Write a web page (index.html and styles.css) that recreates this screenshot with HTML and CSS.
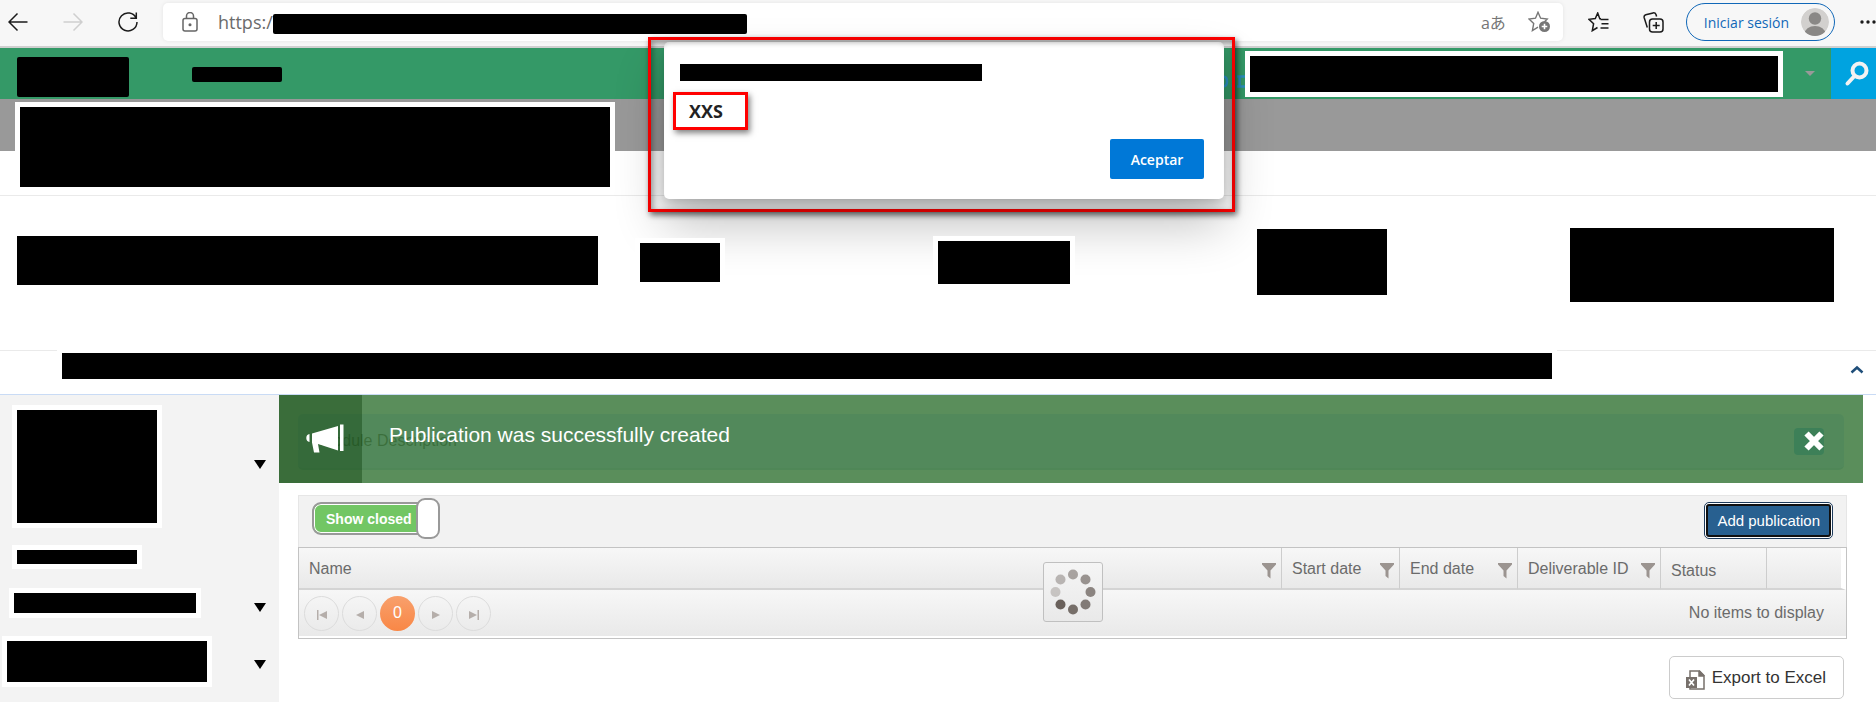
FILE: index.html
```html
<!DOCTYPE html>
<html lang="es">
<head>
<meta charset="utf-8">
<title>Publications</title>
<link rel="stylesheet" href="styles.css">
</head>
<body>
<header class="browser">
  <button class="nav" aria-label="Back"><svg width="20" height="20" viewBox="0 0 20 20"><path d="M19.500 10H1M9.500 1.500L1 10l8.500 8.500"/></svg></button>
  <button class="nav nav-off" aria-label="Forward"><svg width="20" height="20" viewBox="0 0 20 20"><path d="M.5 10H19M10.500 1.500L19 10l-8.500 8.500"/></svg></button>
  <button class="nav" aria-label="Reload"><svg width="20" height="20" viewBox="0 0 20 20"><path d="M18.200 6.200A9 9 0 1 0 19 10M18.300.5v5.700h-6"/></svg></button>
  <div class="address">
    <svg class="lock" width="16" height="20" viewBox="0 0 16 20"><rect x="1" y="6.500" width="14" height="12.500" rx="2"/><path d="M4.500 6.500V4a3.500 3.500 0 0 1 7 0v2.500"/><circle cx="8" cy="12.800" r=".8"/></svg>
    <span class="url">https:/</span><span class="bar bar-url"></span>
    <span class="translate">aあ</span>
    <svg class="star" width="23" height="22" viewBox="0 0 23 22"><path d="M10 16.200l-5.600 3.300 1.300-6.900L1 8l6.500-.8L10 1.300l2.600 5.900 6.600.8-2.400 2.400"/><circle class="fill" cx="16.500" cy="15.500" r="5.500"/><path class="plus" d="M16.500 12.700v5.600M13.700 15.500h5.600"/></svg>
  </div>
  <button class="nav" aria-label="Favorites"><svg width="21" height="20" viewBox="0 0 21 20"><path d="M13 6.800h-1.200L9.700 1 7.300 6.500 1 7.300l4.600 4.400-1.300 7 5.200-3.200M12.500 7.500h8M13.500 11.800h7M12.500 16h8"/></svg></button>
  <button class="nav" aria-label="Collections"><svg width="21" height="21" viewBox="0 0 21 21"><rect x="6.500" y="7" width="13.500" height="13" rx="3"/><path d="M13.200 10v7M9.700 13.500h7M4.300 15.500L1.200 5.800Q.6 3.600 2.800 2.800L10 .9q2.200-.4 3 1.600l.6 2"/></svg></button>
  <button class="signin">Iniciar sesión
    <svg width="28" height="28" viewBox="0 0 28 28"><defs><clipPath id="disc"><circle cx="14" cy="14" r="14"/></clipPath></defs><g clip-path="url(#disc)"><circle cx="14" cy="14" r="14" fill="#d2d0ce"/><circle cx="14" cy="10.500" r="6.200" fill="#8a8886"/><ellipse cx="14" cy="26" rx="10.500" ry="8" fill="#8a8886"/></g></svg>
  </button>
  <button class="nav more" aria-label="More"><svg width="22" height="4" viewBox="0 0 22 4"><circle cx="2" cy="2" r="1.700"/><circle cx="8" cy="2" r="1.700"/><circle cx="14" cy="2" r="1.700"/></svg></button>
</header>

<div class="topbar">
  <span class="bar bar-logo"></span>
  <span class="bar bar-menu"></span>
  <svg class="trace" width="22" height="13" viewBox="0 0 22 13"><path d="M0 1.500q4 0 4 5t-4 5M10 9v3M16.500 1.500v11M14 1.500h8M14 11.500h8"/></svg>
  <span class="bar bar-user framed"></span>
  <span class="caret"></span>
  <button class="search" aria-label="Search"><svg width="26" height="26" viewBox="0 0 26 26"><circle cx="15.500" cy="9.500" r="7"/><path d="M10 15.500L3.500 22.500"/></svg></button>
</div>

<section class="title"><span class="bar bar-title framed"></span></section>

<section class="summary">
  <span class="bar bar-s1"></span>
  <span class="bar bar-s2 framed"></span>
  <span class="bar bar-s3 framed"></span>
  <span class="bar bar-s4"></span>
  <span class="bar bar-s5"></span>
</section>

<section class="strip">
  <span class="bar bar-strip framed"></span>
  <button class="collapse" aria-label="Collapse"><svg width="14" height="9" viewBox="0 0 14 9"><path d="M1.500 7.500L7 2.500l5.500 5"/></svg></button>
</section>

<main class="body">
  <nav class="side">
    <div class="entry entry-1"><span class="bar framed"></span><span class="drop"></span></div>
    <div class="entry entry-2"><span class="bar framed"></span></div>
    <div class="entry entry-3"><span class="bar framed"></span><span class="drop"></span></div>
    <div class="entry entry-4"><span class="bar framed"></span><span class="drop"></span></div>
  </nav>

  <div class="content">
    <div class="module"><span>Module Description</span><span class="module-btn"></span></div>
    <div class="notice" role="alert">
      <div class="notice-icon"><svg width="38" height="29" viewBox="0 0 38 29"><path d="M3.500 10v8Q.3 17.500.3 14t3.200-4zM6 9.500L32 2v24.500L12 20l1.500 8.500H8L6 18.500zM34 .5h3.500v26.500H34z"/></svg></div>
      <p>Publication was successfully created</p>
      <button class="close" aria-label="Close"><svg width="22" height="22" viewBox="0 0 22 22"><path d="M3.500 3.500l15 15M18.500 3.500l-15 15"/></svg></button>
    </div>

    <div class="toolbar">
      <button class="toggle" role="switch" aria-checked="true">Show closed<span class="knob"></span></button>
      <button class="add">Add publication</button>
    </div>

    <div class="grid">
      <table>
        <colgroup><col><col class="c-date"><col class="c-date"><col class="c-id"><col class="c-status"><col class="c-last"></colgroup>
        <thead><tr>
          <th><div class="th">Name<svg width="14" height="16" viewBox="0 0 14 16"><path d="M0 0h14v1.500L8.500 7.500v8L5.500 13V7.500L0 1.500z"/></svg></div></th>
          <th><div class="th">Start date<svg width="14" height="16" viewBox="0 0 14 16"><path d="M0 0h14v1.500L8.500 7.500v8L5.500 13V7.500L0 1.500z"/></svg></div></th>
          <th><div class="th">End date<svg width="14" height="16" viewBox="0 0 14 16"><path d="M0 0h14v1.500L8.500 7.500v8L5.500 13V7.500L0 1.500z"/></svg></div></th>
          <th><div class="th">Deliverable ID<svg width="14" height="16" viewBox="0 0 14 16"><path d="M0 0h14v1.500L8.500 7.500v8L5.500 13V7.500L0 1.500z"/></svg></div></th>
          <th class="th-status">Status</th>
          <th></th>
        </tr></thead>
      </table>
      <div class="pager">
        <button aria-label="First page"><svg width="10" height="10" viewBox="0 0 10 10"><path d="M0 0h1.500v10H0zM10 1v8L2 5z"/></svg></button>
        <button aria-label="Previous page"><svg width="10" height="10" viewBox="0 0 10 10"><path d="M9 1v8L1 5z"/></svg></button>
        <button class="current">0</button>
        <button aria-label="Next page"><svg width="10" height="10" viewBox="0 0 10 10"><path d="M1 1v8l8-4z"/></svg></button>
        <button aria-label="Last page"><svg width="10" height="10" viewBox="0 0 10 10"><path d="M8.500 0H10v10H8.500zM0 1v8l8-4z"/></svg></button>
        <span class="empty">No items to display</span>
      </div>
      <div class="loader"><svg width="46" height="46" viewBox="0 0 46 46"><g fill="#69605b"><circle cx="23" cy="5.500" r="5" opacity=".55"/><circle cx="35.500" cy="10.500" r="5" opacity=".65"/><circle cx="40.500" cy="23" r="5" opacity=".75"/><circle cx="35.500" cy="35.500" r="5" opacity=".82"/><circle cx="23" cy="40.500" r="5" opacity=".9"/><circle cx="10.500" cy="35.500" r="5"/><circle cx="5.500" cy="23" r="5" opacity=".3"/><circle cx="10.500" cy="10.500" r="5" opacity=".42"/></g></svg></div>
    </div>

    <button class="export"><svg width="19" height="20" viewBox="0 0 19 20"><path d="M4 7V1h9.500L18 5.500V19H4v-2M13 1v5h5" fill="none" stroke="#77706b" stroke-width="1.500"/><path d="M13 0l6 6h-6zM0 7h11v11H0z" fill="#77706b"/><path d="M3 9.500l5 6M8 9.500l-5 6" stroke="#fff" stroke-width="1.700"/></svg>Export to Excel</button>
  </div>
</main>

<div class="highlight">
  <div class="dialog" role="alertdialog" aria-label="XXS">
    <span class="bar bar-origin"></span>
    <p class="message">XXS</p>
    <button class="accept">Aceptar</button>
  </div>
</div>
</body>
</html>
```

FILE: styles.css
```css
* { box-sizing: border-box; }
body {
  margin: 0;
  min-height: 100vh;
  display: flex;
  flex-direction: column;
  position: relative;
  overflow: hidden;
  background: #fff;
  font-family: "Liberation Sans", Arial, sans-serif;
}
button { font: inherit; margin: 0; padding: 0; border: 0; background: none; cursor: pointer; }
p { margin: 0; }
svg { display: block; flex: none; }

/* Blacked-out areas */
.bar { display: block; background: #000; flex: none; }
.framed { box-sizing: content-box; border: 5px solid #fff; position: relative; z-index: 3; }

/* Browser chrome */
.browser {
  display: flex;
  align-items: center;
  height: 48px;
  padding: 0 0 2px 8px;
  border-bottom: 2px solid #d0d0d0;
  background: #f7f7f7;
  font-family: "Open Sans", "Noto Sans CJK JP", sans-serif;
}
.nav { margin-right: 35px; }
.nav svg { fill: none; stroke: #1b1b1b; stroke-width: 1.5; }
.nav-off svg { stroke: #cfcfcf; }
.nav:nth-of-type(3) { margin-right: 25px; }
.address {
  flex: 1;
  display: flex;
  align-items: center;
  height: 38px;
  margin-right: 25px;
  padding: 0 12px 0 19px;
  border-radius: 5px;
  background: #fff;
  box-shadow: 0 0 4px rgba(0, 0, 0, .08);
}
.lock { fill: none; stroke: #666; stroke-width: 1.5; margin-right: 20px; }
.url { font-size: 18px; color: #6b6b6b; }
.bar-url { width: 474px; height: 20px; margin-top: 4px; border-radius: 2px; }
.translate { margin-left: auto; margin-right: 22px; font-size: 16px; color: #767676; }
.star { fill: none; stroke: #767676; stroke-width: 1.4; }
.star .fill { fill: #767676; stroke: none; }
.star .plus { stroke: #fff; stroke-width: 1.6; }
.address ~ .nav { margin-right: 34px; }
.address ~ .nav + .nav { margin-right: 22px; }
.signin {
  display: flex;
  align-items: center;
  gap: 12px;
  height: 38px;
  padding: 0 5px 0 17px;
  border: 1px solid #1168b8;
  border-radius: 19px;
  color: #1168b8;
  font-size: 14px;
}
.address ~ .more { margin: 0 0 0 25px; width: 16px; overflow: hidden; }
.more svg { fill: #1b1b1b; stroke: none; }

/* Site header */
.topbar { display: flex; align-items: center; height: 51px; padding-left: 17px; background: #349967; }
.bar-logo { width: 112px; height: 40px; margin: 6px 63px 0 0; border-radius: 2px; }
.bar-menu { width: 90px; height: 15px; margin-top: 2px; border-radius: 2px; }
.trace { margin: 16px 0 0 auto; fill: none; stroke: #2a8fc0; stroke-width: 2.5; }
.bar-user { width: 528px; height: 36px; }
.caret { margin: 0 16px 0 22px; border: 5px solid transparent; border-top-color: #999; border-bottom: 0; }
.search { display: flex; align-items: center; align-self: stretch; padding: 0 6px 0 13px; background: #00a3e0; }
.search svg { fill: none; stroke: #f2f2f2; stroke-width: 4; stroke-linecap: round; }

.title {
  padding: 3px 0 3px 15px;
  border-bottom: 1px solid #eaeaea;
  background: linear-gradient(#999 52px, #fff 52px);
}
.bar-title { width: 590px; height: 80px; }

.summary {
  display: grid;
  grid-template-columns: 618fr 298fr 324fr 313fr 289fr;
  align-items: center;
  height: 154px;
  padding: 0 17px 22px 17px;
}
.bar-s1 { width: 581px; height: 49px; margin-bottom: 4px; }
.bar-s2 { width: 80px; height: 39px; }
.bar-s3 { width: 132px; height: 43px; }
.bar-s4 { width: 130px; height: 66px; }
.bar-s5 { width: 264px; height: 74px; margin-top: 6px; }

.strip {
  display: flex;
  justify-content: space-between;
  align-items: flex-start;
  height: 45px;
  padding: 0 12px 0 57px;
  border-top: 1px solid #eaeaea;
  border-bottom: 1px solid #c9dbf5;
}
.bar-strip { width: 1490px; height: 26px; margin-top: -3px; }
.collapse { padding-top: 14px; }
.collapse svg { fill: none; stroke: #1f4e79; stroke-width: 2.5; }

/* Sidebar */
.body { flex: 1; display: flex; }
.side { flex: none; width: 279px; padding-top: 10px; background: #f3f3f3; }
.entry { display: flex; justify-content: space-between; align-items: center; padding: 0 13px 0 12px; }
.drop { border: 6px solid transparent; border-top: 9px solid #000; border-bottom: 0; }
.entry-1 .bar { width: 140px; height: 113px; }
.entry-1 .drop { margin-bottom: 5px; }
.entry-2 { margin-top: 17px; }
.entry-2 .bar { width: 120px; height: 14px; }
.entry-3 { margin-top: 19px; padding-left: 9px; }
.entry-3 .bar { width: 182px; height: 20px; }
.entry-3 .drop { margin-top: 8px; }
.entry-4 { margin-top: 18px; padding-left: 2px; }
.entry-4 .bar { width: 200px; height: 41px; }
.entry-4 .drop { margin-top: 6px; }

/* Content */
.content { flex: 1; min-width: 0; position: relative; padding: 19px 29px 0 19px; }
.module {
  display: flex;
  align-items: center;
  justify-content: space-between;
  height: 56px;
  margin-right: 3px;
  padding: 0 20px 0 22px;
  border-bottom: 2px solid #b4cfe4;
  border-radius: 5px;
  background: #c9deff;
  color: #333;
  font-size: 16px;
}
.module-btn { width: 30px; height: 27px; border-radius: 4px; background: #3ca0e9; }
.notice {
  position: absolute;
  inset: 0 13px auto 0;
  display: flex;
  height: 88px;
  background: rgba(61, 122, 62, .85);
  color: #fff;
  font-size: 21px;
}
.notice-icon { width: 83px; padding: 29px 0 0 27px; background: rgba(10, 60, 10, .4); }
.notice-icon svg { fill: #fff; }
.notice p { flex: 1; padding: 28px 0 0 27px; line-height: 24px; }
.close { align-self: flex-start; padding: 35px 38px 0 0; }
.close svg { stroke: #fff; stroke-width: 6; }

.toolbar {
  display: flex;
  justify-content: space-between;
  align-items: flex-start;
  height: 52px;
  margin-top: 25px;
  padding: 6px 13px 0;
  border: 1px solid #e6e6e6;
  border-bottom: 0;
  background: #f2f2f2;
}
.toggle {
  position: relative;
  width: 127px;
  height: 33px;
  padding-left: 12px;
  border: 2px solid #999;
  border-radius: 9px;
  background: #72c664;
  box-shadow: inset 0 0 0 1px #fff;
  color: #fff;
  font-size: 14px;
  font-weight: bold;
  text-align: left;
}
.knob {
  position: absolute;
  top: -6px;
  right: -3px;
  width: 24px;
  height: 41px;
  border: 2px solid #999;
  border-radius: 9px;
  background: #fff;
}
.add {
  height: 33px;
  margin: 2px 2px 0 0;
  padding: 0 9px;
  border: 2px solid #101010;
  border-radius: 3px;
  outline: 1px solid #1d3b5c;
  outline-offset: 1px;
  box-shadow: 0 0 0 1px #fff;
  background: #286090;
  color: #fff;
  font-size: 15px;
}
.grid { position: relative; border: 1px solid #c3c3c3; padding-bottom: 2px; color: #6b6b6b; font-size: 16px; }
.grid table { width: 100%; table-layout: fixed; border-collapse: separate; border-spacing: 0; }
.grid th {
  height: 42px;
  padding: 2px 5px 0 10px;
  border-right: 1px solid #cdcdcd;
  border-bottom: 2px solid #d4d4d4;
  background: linear-gradient(#f7f7f7, #e9e9e9);
  font-weight: normal;
  text-align: left;
}
.grid th:last-child { border-right: 5px solid #fff; }
.c-date { width: 118px; }
.c-id { width: 143px; }
.c-status { width: 106px; }
.c-last { width: 79px; }
.th { display: flex; align-items: center; justify-content: space-between; }
.th svg { fill: #9b9490; margin-top: 4px; }
.grid .th-status { padding-top: 5px; }
.pager {
  display: flex;
  align-items: center;
  gap: 3px;
  height: 46px;
  padding: 0 22px 0 5px;
  background: linear-gradient(#f7f7f7, #e9e9e9);
}
.pager button {
  display: flex;
  align-items: center;
  justify-content: center;
  width: 35px;
  height: 35px;
  border: 1px solid #dcdcdc;
  border-radius: 50%;
}
.pager button svg { fill: #b5aeaa; margin-top: 3px; }
.pager .current { border: 0; background: linear-gradient(#f8a06c, #f98746); color: #fff; }
.empty { margin-left: auto; }
.loader {
  position: absolute;
  top: 14px;
  left: calc(50% - 30px);
  padding: 6px;
  border: 1px solid #c0c0c0;
  border-radius: 3px;
  background: linear-gradient(#f5f5f5, #e9e9e9);
}
.export {
  display: flex;
  align-items: center;
  gap: 7px;
  height: 43px;
  margin: 17px 3px 0 auto;
  padding: 0 17px 0 16px;
  border: 1px solid #ccc;
  border-radius: 5px;
  background: #fff;
  color: #333;
  font-size: 17px;
}
.export svg { margin-top: 4px; }

/* Alert dialog with its annotation frame */
.highlight {
  position: absolute;
  z-index: 2;
  top: 37px;
  left: calc(50% - 290px);
  width: 587px;
  padding: 2px 8px 10px 13px;
  border: 3px solid #f00;
  box-shadow: 2px 3px 6px rgba(0, 0, 0, .6), inset 2px 3px 6px rgba(0, 0, 0, .4);
}
.dialog {
  display: flex;
  flex-direction: column;
  align-items: flex-start;
  padding: 22px 20px 20px 9px;
  border-radius: 5px;
  background: #fff;
  box-shadow: 0 26px 50px rgba(0, 0, 0, .24), 0 5px 14px rgba(0, 0, 0, .2), inset 0 5px 5px -4px rgba(0, 0, 0, .25);
  font-family: "Open Sans", sans-serif;
}
.bar-origin { width: 302px; height: 17px; margin-left: 7px; }
.message {
  width: 75px;
  margin-top: 11px;
  padding: 5px 0 5px 13px;
  border: 3px solid #f00;
  box-shadow: 2px 3px 6px rgba(0, 0, 0, .5);
  color: #222;
  font-size: 18px;
  font-weight: bold;
  line-height: 22px;
}
.accept {
  align-self: flex-end;
  width: 94px;
  height: 40px;
  margin-top: 9px;
  border-radius: 2px;
  background: #0078d7;
  color: #fff;
  font-size: 14px;
  font-weight: 600;
}
```
